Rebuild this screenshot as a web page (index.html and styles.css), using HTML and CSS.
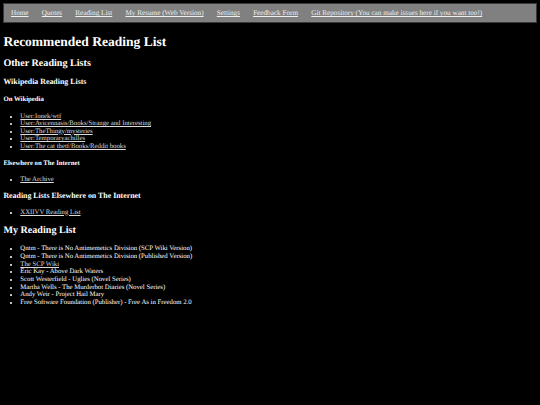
FILE: index.html
```html
<!DOCTYPE html>
<html>
<head>
<meta charset="utf-8">
<title>Recommended Reading List</title>
<link rel="stylesheet" href="styles.css">
</head>
<body>
<nav class="topnav">
  <a href="#">Home</a>
  <a href="#">Quotes</a>
  <a href="#">Reading List</a>
  <a href="#">My Resume (Web Version)</a>
  <a href="#">Settings</a>
  <a href="#">Feedback Form</a>
  <a href="#">Git Repository (You can make issues here if you want too!)</a>
</nav>
<h1 class="title">Recommended Reading List</h1>
<h2>Other Reading Lists</h2>
<h3>Wikipedia Reading Lists</h3>
<h4>On Wikipedia</h4>
<ul>
  <li><a href="#">User:Ionek/wtf</a></li>
  <li><a href="#">User:Avicennasis/Books/Strange and Interesting</a></li>
  <li><a href="#">User:TheThingy/mysteries</a></li>
  <li><a href="#">User:Temporaryachilles</a></li>
  <li><a href="#">User:The cat thetf/Books/Reddit books</a></li>
</ul>
<h4>Elsewhere on The Internet</h4>
<ul>
  <li><a href="#">The Archive</a></li>
</ul>
<h3>Reading Lists Elsewhere on The Internet</h3>
<ul>
  <li><a href="#">XXIIVV Reading List</a></li>
</ul>
<h2>My Reading List</h2>
<ul class="mylist">
  <li>Qntm - There is No Antimemetics Division (SCP Wiki Version)</li>
  <li>Qntm - There is No Antimemetics Division (Published Version)</li>
  <li><a href="#">The SCP Wiki</a></li>
  <li>Eric Kay - Above Dark Waters</li>
  <li>Scott Westerfield - Uglies (Novel Series)</li>
  <li>Martha Wells - The Murderbot Diaries (Novel Series)</li>
  <li>Andy Weir - Project Hail Mary</li>
  <li>Free Software Foundation (Publisher) - Free As in Freedom 2.0</li>
</ul>
</body>
</html>
```
FILE: styles.css
```css
html {
  background: #000;
}
body {
  margin: 3.4px;
  font-family: "Liberation Serif", "Times New Roman", serif;
  font-size: 6.75px;
  line-height: 1.13;
  color: #fff;
  background: #000;
  text-rendering: geometricPrecision;
}
a {
  color: #dcdcdc;
}
.topnav {
  display: flex;
  flex-wrap: wrap;
  background: #808080;
  border: 1px solid #3a3a3a;
  padding: 4.9px 0;
  font-size: 7.2px;
  line-height: 8.2px;
}
.topnav a {
  color: #f0f0f0;
  padding: 0 6.6px;
}
h1, h2, h3, h4 {
  font-weight: bold;
}
.title {
  padding-top: 1.6px;
}
ul {
  padding-left: 16.9px;
  margin: 1em 0;
}
.mylist {
  padding-top: 1px;
}
```
